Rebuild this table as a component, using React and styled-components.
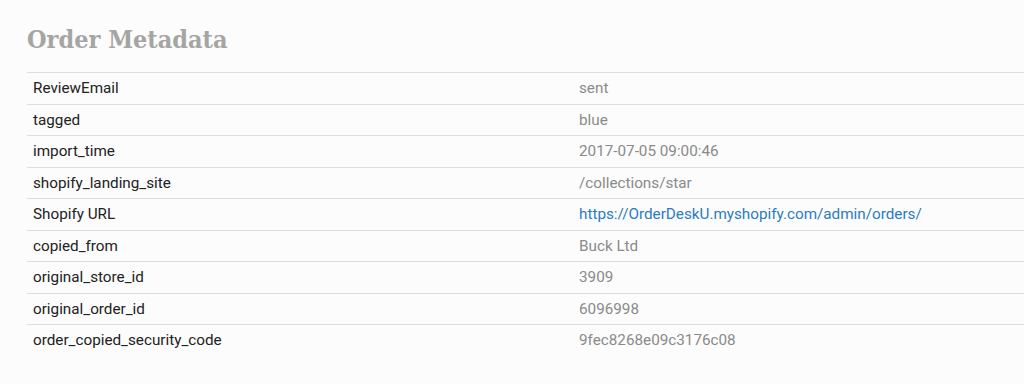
import React from 'react'
import styled, { createGlobalStyle } from 'styled-components'

const GlobalStyle = createGlobalStyle`
  body {
    margin: 0;
    background-color: #fcfcfc;
    font-family: Roboto, "Liberation Sans", sans-serif;
  }
`;

const Page = styled.div`
  padding: 24px 0 0 27px;
  height: 384px;
  box-sizing: border-box;
  overflow: hidden;
`;

const Title = styled.h2`
  margin: 0 0 16px 0;
  font-family: "DejaVu Serif Condensed", "DejaVu Serif", serif;
  font-stretch: condensed;
  font-weight: bold;
  font-size: 25px;
  line-height: 32px;
  color: #a5a5a3;
`;

const Table = styled.div`
  display: flex;
  flex-direction: column;
  width: 100%;
`;

const Row = styled.div`
  display: grid;
  grid-template-columns: 552px 1fr;
  border-top: 1px solid #dddddd;
  padding: 5px 0 5px 0;
  line-height: 20.5px;
  font-size: 15.25px;
`;

const Key = styled.div`
  padding-left: 6px;
  color: #222222;
`;

const Value = styled.div`
  color: #8a8a8a;
`;

const Link = styled.a`
  color: #2b7bc4;
  text-decoration: none;
`;

const rows = [
  ['ReviewEmail', 'sent'],
  ['tagged', 'blue'],
  ['import_time', '2017-07-05 09:00:46'],
  ['shopify_landing_site', '/collections/star'],
  ['Shopify URL', 'https://OrderDeskU.myshopify.com/admin/orders/', true],
  ['copied_from', 'Buck Ltd'],
  ['original_store_id', '3909'],
  ['original_order_id', '6096998'],
  ['order_copied_security_code', '9fec8268e09c3176c08'],
]

export default function App() {
  return (
    <Page>
      <GlobalStyle />
      <Title>Order Metadata</Title>
      <Table>
        {rows.map(([k, v, link]) => (
          <Row key={k}>
            <Key>{k}</Key>
            <Value>{link ? <Link href="#">{v}</Link> : v}</Value>
          </Row>
        ))}
      </Table>
    </Page>
  )
}
